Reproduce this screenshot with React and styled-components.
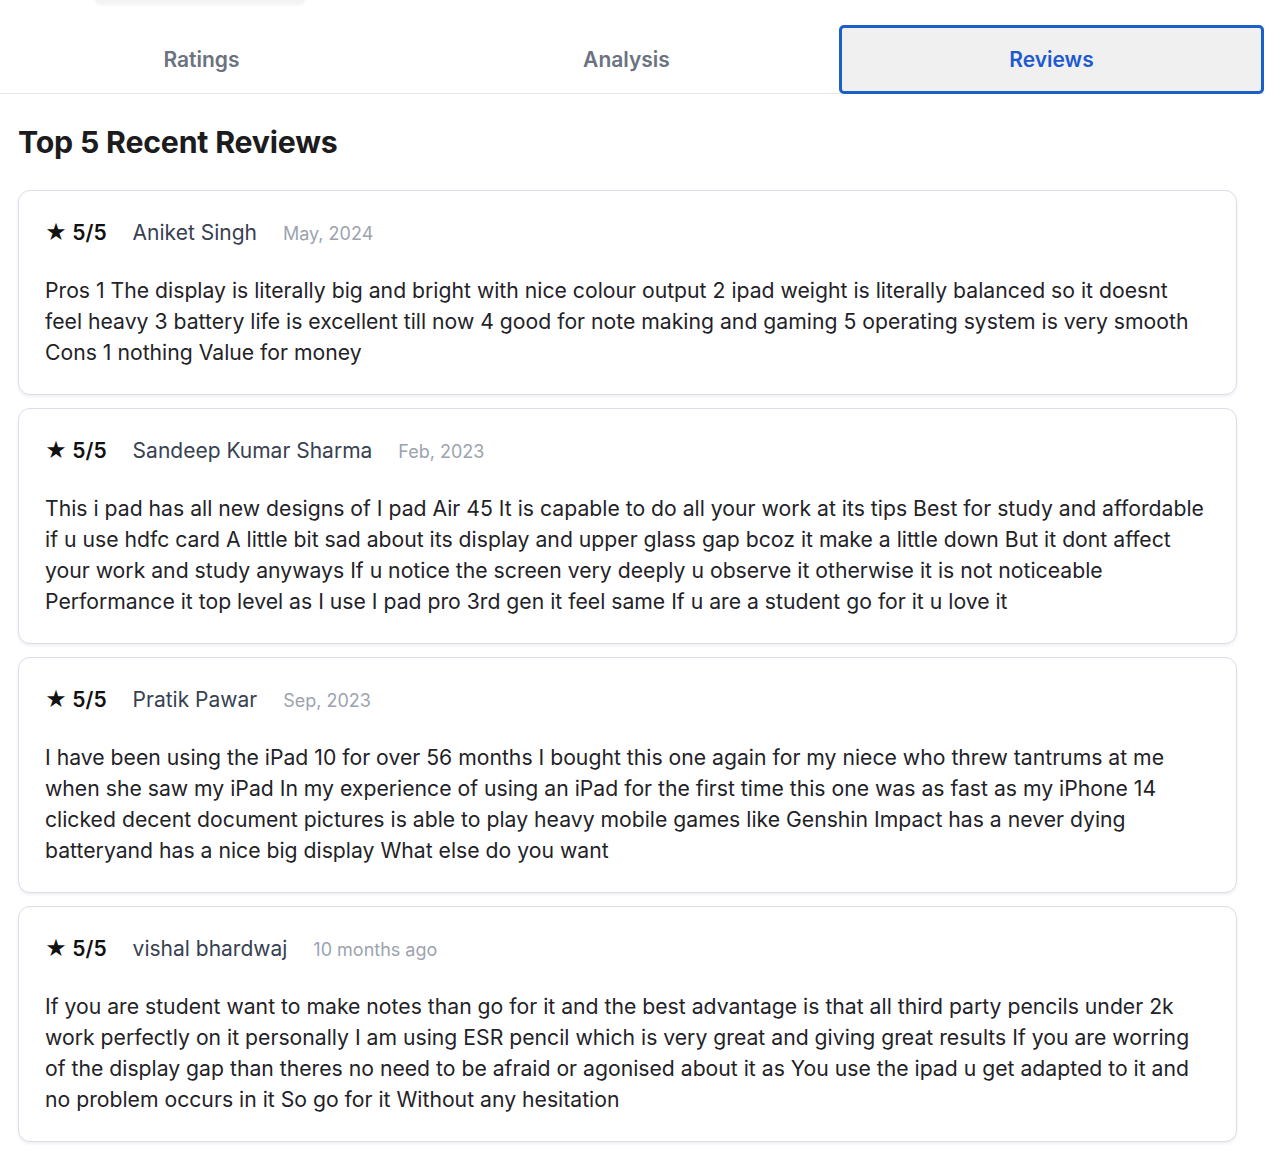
import React from "react";
import styled, { createGlobalStyle } from "styled-components";

const Global = createGlobalStyle`
  html, body { margin: 0; padding: 0; background: #ffffff; overflow-x: hidden; }
  body { font-family: Inter, "Noto Sans", "Liberation Sans", sans-serif; -webkit-font-smoothing: antialiased; }
  * { box-sizing: border-box; }
`;

const Page = styled.div`
  width: 1280px;
  min-height: 1154px;
  background: #fff;
  overflow: hidden;
`;

const TopShade = styled.div`
  width: 210px;
  height: 6px;
  margin-left: 95px;
  border-radius: 0 0 12px 12px;
  background: linear-gradient(#f1f1f3, #fafafa);
`;

const Tabs = styled.div`
  display: flex;
  width: 1275px;
  margin-left: -11px;
  margin-top: 19px;
  border-bottom: 1px solid #e5e7eb;
`;

const Tab = styled.button`
  flex: 1;
  height: 69px;
  margin-bottom: -1px;
  border: ${(p) => (p.$active ? "3px solid #1b5fc9" : "3px solid transparent")};
  border-radius: 5px;
  background: ${(p) => (p.$active ? "#f0f0f1" : "transparent")};
  color: ${(p) => (p.$active ? "#1d5ad2" : "#6b7280")};
  font-family: Inter, "Noto Sans", sans-serif;
  font-size: 21px;
  font-weight: 600;
  padding: 0;
  padding-bottom: 1px;
  cursor: pointer;
`;

const Content = styled.div`
  padding: 0 43px 0 18px;
`;

const Heading = styled.h2`
  margin: 30px 0 30px;
  font-size: 30.3px;
  line-height: 36px;
  font-weight: 700;
  color: #1c1c1e;
  letter-spacing: -0.2px;
`;

const List = styled.div`
  display: flex;
  flex-direction: column;
  gap: 13px;
`;

const Card = styled.div`
  border: 1.5px solid #dedbea;
  border-radius: 12px;
  background: #fff;
  padding: 27px 26px 26px 26px;
  box-shadow: 0 2px 3px rgba(60, 60, 90, 0.08);
`;

const Header = styled.div`
  display: flex;
  align-items: baseline;
  gap: 26px;
  line-height: 30px;
`;

const Rating = styled.span`
  font-size: 21px;
  font-weight: 600;
  color: #111;
`;

const Name = styled.span`
  font-size: 21px;
  color: #374151;
`;

const DateText = styled.span`
  font-size: 18px;
  color: #9ca3af;
`;

const Body = styled.p`
  margin: 26px 0 0;
  font-size: 21.2px;
  line-height: 31px;
  color: #1f2328;
`;

const reviews = [
  {
    name: "Aniket Singh",
    date: "May, 2024",
    text: "Pros 1 The display is literally big and bright with nice colour output 2 ipad weight is literally balanced so it doesnt feel heavy 3 battery life is excellent till now 4 good for note making and gaming 5 operating system is very smooth Cons 1 nothing Value for money",
  },
  {
    name: "Sandeep Kumar Sharma",
    date: "Feb, 2023",
    text: "This i pad has all new designs of I pad Air 45 It is capable to do all your work at its tips Best for study and affordable if u use hdfc card A little bit sad about its display and upper glass gap bcoz it make a little down But it dont affect your work and study anyways If u notice the screen very deeply u observe it otherwise it is not noticeable Performance it top level as I use I pad pro 3rd gen it feel same If u are a student go for it u love it",
  },
  {
    name: "Pratik Pawar",
    date: "Sep, 2023",
    text: "I have been using the iPad 10 for over 56 months I bought this one again for my niece who threw tantrums at me when she saw my iPad In my experience of using an iPad for the first time this one was as fast as my iPhone 14 clicked decent document pictures is able to play heavy mobile games like Genshin Impact has a never dying batteryand has a nice big display What else do you want",
  },
  {
    name: "vishal bhardwaj",
    date: "10 months ago",
    text: "If you are student want to make notes than go for it and the best advantage is that all third party pencils under 2k work perfectly on it personally I am using ESR pencil which is very great and giving great results If you are worring of the display gap than theres no need to be afraid or agonised about it as You use the ipad u get adapted to it and no problem occurs in it So go for it Without any hesitation",
  },
];

export default function App() {
  return (
    <Page>
      <Global />
      <TopShade />
      <Tabs>
        <Tab>Ratings</Tab>
        <Tab>Analysis</Tab>
        <Tab $active>Reviews</Tab>
      </Tabs>
      <Content>
        <Heading>Top 5 Recent Reviews</Heading>
        <List>
          {reviews.map((r) => (
            <Card key={r.name}>
              <Header>
                <Rating>★ 5/5</Rating>
                <Name>{r.name}</Name>
                <DateText>{r.date}</DateText>
              </Header>
              <Body>{r.text}</Body>
            </Card>
          ))}
        </List>
      </Content>
    </Page>
  );
}
